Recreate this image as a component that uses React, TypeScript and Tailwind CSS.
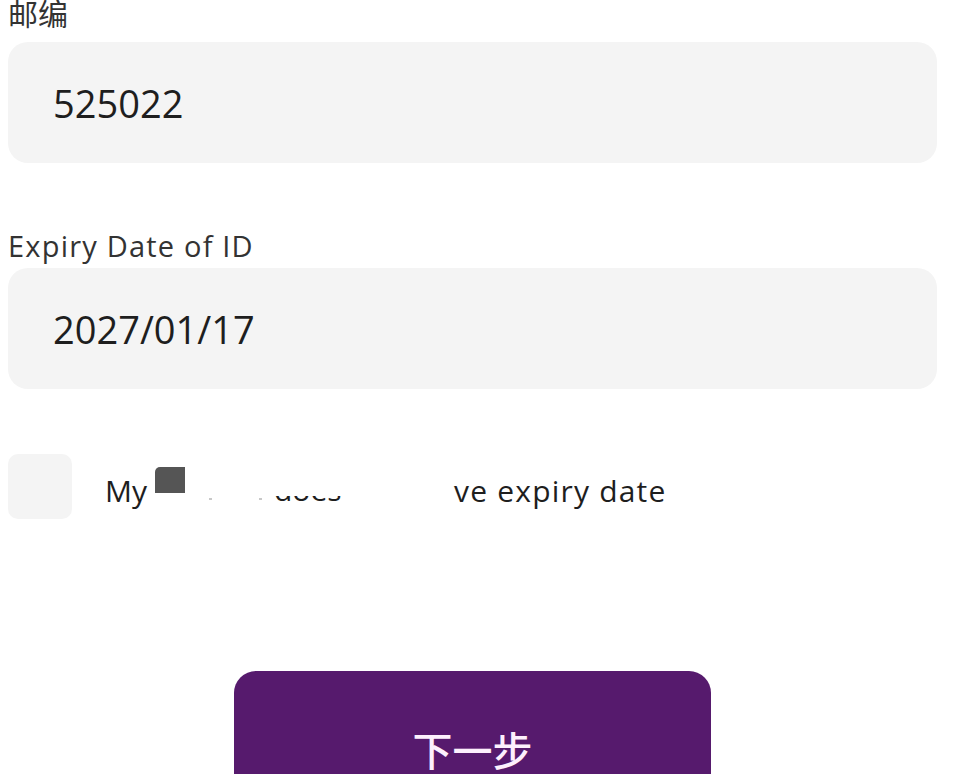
const sans = "font-['Open_Sans','Noto_Sans_CJK_SC',sans-serif]";
const cjk = "font-['Noto_Sans_CJK_SC','Noto_Sans',sans-serif]";

function Field({ value }: { value: string }) {
  return (
    <div className="flex h-[121px] w-[929px] items-center rounded-[20px] bg-[#f4f4f4] pl-[45px]">
      <span className={`${sans} text-[38px] leading-[38px] text-[#1e1e1e]`}>
        {value}
      </span>
    </div>
  );
}

export default function App() {
  return (
    <div className="h-[774px] w-[957px] overflow-hidden bg-white pl-[8px]">
      <div className={`${cjk} -mt-[3px] text-[30px] leading-[30px] text-[#333]`}>
        邮编
      </div>
      <div className="mt-[15px]">
        <Field value="525022" />
      </div>

      <div
        className={`${sans} mt-[66px] h-[34px] text-[29px] leading-[34px] tracking-[1.2px] text-[#333]`}
      >
        Expiry Date of ID
      </div>
      <div className="mt-[5px]">
        <Field value="2027/01/17" />
      </div>

      <div className="mt-[65px] flex items-start">
        <div className="h-[65px] w-[64px] shrink-0 rounded-[10px] bg-[#f4f4f4]" />
        <div
          className={`${sans} ml-[33px] mt-[13px] whitespace-nowrap text-[30px] leading-[30px] text-[#1e1e1e]`}
        >
          <span>My</span>
          <span className="mb-[9px] ml-[8px] inline-block h-[26px] w-[30px] rounded-tl-[5px] bg-[#555] align-baseline" />
          <span className="mb-[2px] ml-[24px] inline-block h-[2px] w-[3px] bg-[#c8c8c8] align-baseline" />
          <span className="mb-[2px] ml-[47px] inline-block h-[2px] w-[3px] bg-[#c8c8c8] align-baseline" />
          {/* redacted word, only the lower edge shows */}
          <span className="-mb-[1px] ml-[12px] inline-block h-[7px] w-[68px] overflow-hidden align-baseline">
            <span className="-mt-[21px] block">does</span>
          </span>
          <span className="ml-[112px] tracking-[1.2px]">ve expiry date</span>
        </div>
      </div>

      <div className="ml-[226px] mt-[152px] flex h-[130px] w-[477px] justify-center rounded-[22px] bg-[#561a6d] pt-[58px]">
        <span className={`${cjk} text-[40px] font-medium leading-[40px] text-[#fdf0fd]`}>
          下一步
        </span>
      </div>
    </div>
  );
}
